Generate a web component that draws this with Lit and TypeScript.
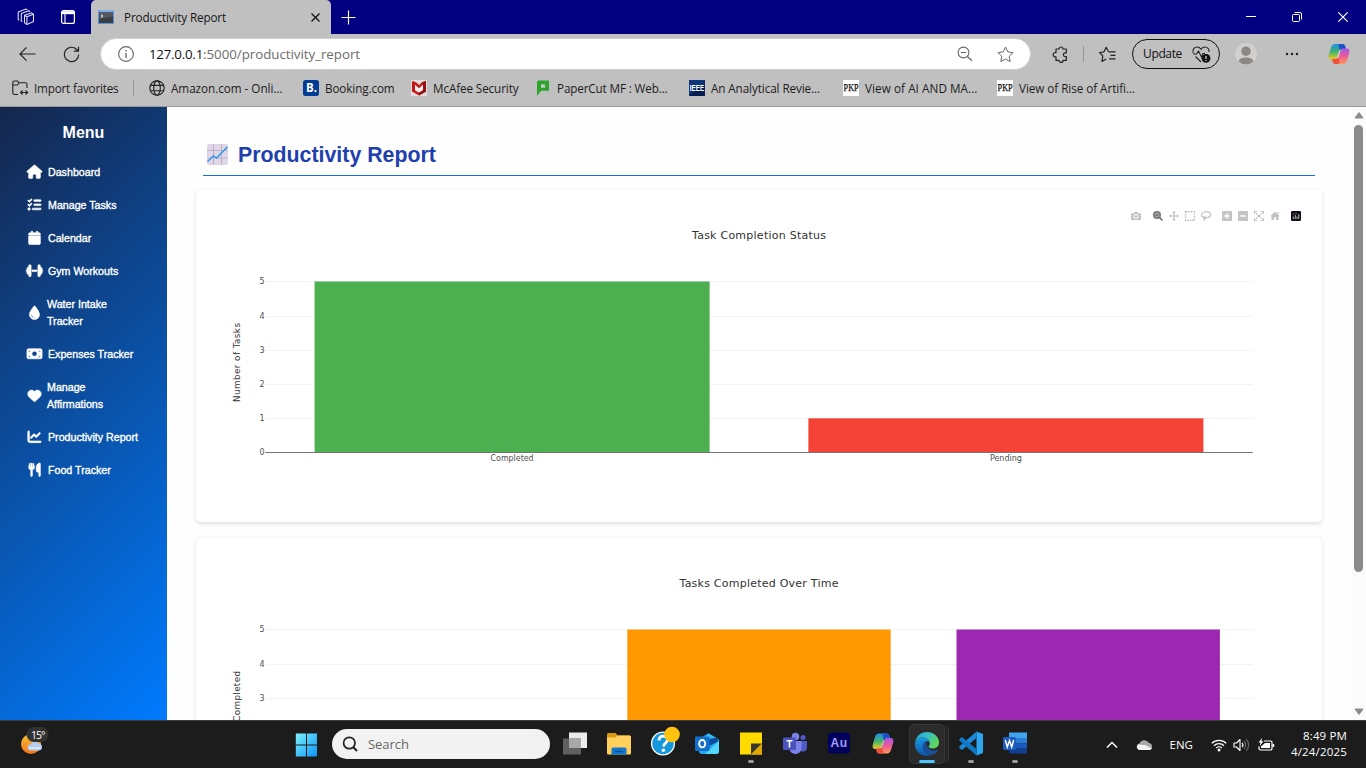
import { LitElement, html, svg, css } from "lit";
import { customElement } from "lit/decorators.js";
import { styleMap } from "lit/directives/style-map.js";

const UI_FONT = '"Open Sans", "Noto Sans", sans-serif';
const ctx = document.createElement("canvas").getContext("2d")!;

/** Text tracked so that it takes up the given advance width. */
function fit(text: string, width: number, size = 11.7, cls = "") {
  ctx.font = `${size}px ${UI_FONT}`;
  const track = (width - ctx.measureText(text).width) / text.length;
  return html`<span class="fit ${cls}" style=${styleMap({ fontSize: `${size}px`, letterSpacing: `${track.toFixed(3)}px` })}>${text}</span>`;
}

const icon = (w: number, h: number, body: unknown, vb = `0 0 ${w} ${h}`) =>
  html`<svg width=${w} height=${h} viewBox=${vb} fill="none">${body}</svg>`;

const shared = css`
  :host { display: block; box-sizing: border-box; font-family: "Open Sans", "Noto Sans", sans-serif; }
  * { box-sizing: border-box; }
  svg { display: block; flex: none; overflow: visible; }
  .fit { white-space: pre; line-height: 16px; }
  .c { display: flex; align-items: center; justify-content: center; }
`;

const copilot = (id: string) => svg`
  <defs>
    <linearGradient id="${id}a" x1="0" y1="0" x2="0" y2="1"><stop offset="0" stop-color="#1f8fe8"/><stop offset=".5" stop-color="#3fb56c"/><stop offset="1" stop-color="#f3c91c"/></linearGradient>
    <linearGradient id="${id}b" x1="0" y1="0" x2="0" y2="1"><stop offset="0" stop-color="#a457e8"/><stop offset=".5" stop-color="#ee5a94"/><stop offset="1" stop-color="#fb9a5a"/></linearGradient>
  </defs>
  <path d="M7 1h7.500c1.600 0 2.300 1 2.700 2.300L18 6h-4c-1.500 0-2.200 1-2.700 2.500l-1.600 5.500c-.5 1.700-1.300 2.500-3 2.500H3.500C.8 16.500.2 14.500.8 12L3 4.500C3.700 2.200 4.800 1 7 1Z" fill="url(#${id}a)"/>
  <path d="M12 1h2.500c1.600 0 2.300 1 2.700 2.300L18 6h-4c-1 0-1.700.5-2.100 1.200L10.500 3C10.200 2 11 1 12 1Z" fill="#1c50c8"/>
  <path d="M15 21H7.500c-1.600 0-2.300-1-2.700-2.300L4 16h4c1.500 0 2.200-1 2.700-2.500L12.300 8c.5-1.500 1.300-2.500 3-2.500h3.200c2.700 0 3.300 2 2.700 4.500L19 17.500c-.7 2.300-1.800 3.500-4 3.500Z" fill="url(#${id}b)"/>
  <path d="M11.900 9.500L9.900 15.500H8.800L10.900 9.200c.4-1.100 1-1.800 1.800-2.200Z" fill="#e6dce0"/>
  <path d="M10 21H7.500c-1.600 0-2.300-1-2.700-2.300L4 16h4c1 0 1.700-.5 2.100-1.200l1.400 4.200c.3 1-.5 2-1.500 2Z" fill="#f0503c"/>`;

const BOOKMARKS: [unknown, string, number][] = [
  [icon(16, 16, svg`<path d="M6 14.500H2.500A1.700 1.700 0 0 1 .8 12.800V2.700A1.700 1.700 0 0 1 2.500 1h3L7 2.800h6.300A1.700 1.700 0 0 1 15 4.500V8M.8 5h4.700L7 3M9 12.500h6.500M10.700 10.300l-2.200 2.200 2.200 2.200M13.500 10.300l2.200 2.200-2.200 2.200" stroke="#222" stroke-width="1.100"/>`), "Import favorites", 84.5],
  [icon(16, 16, svg`<g stroke="#222" stroke-width="1.150"><circle cx="8" cy="8" r="7.200"/><ellipse cx="8" cy="8" rx="3.300" ry="7.200"/><path d="M1.500 5.300h13M1.500 10.700h13"/></g>`), "Amazon.com - Onli...", 111.5],
  [icon(16, 16, svg`<rect width="16" height="16" rx="2.500" fill="#003b95"/><text x="3" y="12" font-size="11.500" font-weight="700" fill="#fff" font-family="Open Sans">B.</text>`), "Booking.com", 69.5],
  [icon(16, 16, svg`<rect width="16" height="16" fill="#e4dcdc"/><path d="M1 1l4 1.200L8 5l3-2.800L15 1v10.500L8 15.500l-7-4Z" fill="#c01818"/><path d="M4 4.700l4 3.500 4-3.500v5.500L8 12.700l-4-2.500Z" fill="#f6eeee"/><path d="M11 2.200L15 1v10.500L8 15.500v-2.800l4-2.500V4.700Z" fill="#8f1010"/>`), "McAfee Security", 85.5],
  [icon(16, 16, svg`<path d="M4 .5h10v10.200H6.200L2 15.800V2.500a2 2 0 0 1 2-2Z" fill="#2ba52b"/><path d="M6 4.300h4v3.500H6Z" fill="#c8c8c8"/>`), "PaperCut MF : Web...", 110.5],
  [icon(16, 16, svg`<rect width="16" height="16" fill="#0c3478"/><path d="M0 16L16 3v13Z" fill="#071c50"/><text x=".8" y="11.400" font-size="8.500" font-weight="700" fill="#fff" font-family="Liberation Sans" textLength="14.400" lengthAdjust="spacingAndGlyphs">IEEE</text>`), "An Analytical Revie...", 109],
  [icon(16, 16, svg`<rect width="16" height="16" fill="#fff"/><text x=".6" y="11.200" font-size="9.500" fill="#111" stroke="#111" stroke-width=".25" font-family="Liberation Serif" textLength="15" lengthAdjust="spacingAndGlyphs">PKP</text>`), "View of AI AND MA...", 112.5],
  [icon(16, 16, svg`<rect width="16" height="16" fill="#fff"/><text x=".6" y="11.200" font-size="9.500" fill="#111" stroke="#111" stroke-width=".25" font-family="Liberation Serif" textLength="15" lengthAdjust="spacingAndGlyphs">PKP</text>`), "View of Rise of Artifi...", 116],
];

@customElement("browser-chrome")
class BrowserChrome extends LitElement {
  static styles = [shared, css`
    .titlebar { height: 34px; background: #000080; display: flex; }
    .lead { width: 91px; padding-left: 5px; display: flex; }
    .lead .c { width: 42px; }
    .tab { width: 240px; background: #c0c0c0; border-radius: 5px 5px 0 0; display: flex; align-items: center; padding: 0 10px 0 7px; color: #151515; }
    .tab .fit { margin-left: 10px; flex: 1; margin-top: -1px; }
    .plus { width: 35px; }
    .wins { margin-left: auto; display: flex; }
    .wins .c { width: 46px; }
    .toolbar { height: 40px; background: #c0c0c0; display: grid; grid-template-columns: 6px 43px 44px 7px 931px 7px 44px 1px 48px 1px 88px 4px 44px 2px 44px 3px 44px; }
    .address { height: 32px; margin-top: 4px; border-radius: 16px; background: #fff; border: 1px solid #d0d0d0; display: flex; align-items: center; padding: 0 16px 0 17px; }
    .host { color: #111; margin-left: 15px; }
    .path { color: #6c6c6c; flex: 1; }
    .address svg + svg { margin-left: 24px; }
    .rule { width: 1px; height: 16px; background: #959595; margin: 12px 0 0 1px; }
    .update { height: 30px; margin-top: 5px; border: 1.3px solid #111; border-radius: 15px; display: flex; align-items: center; padding: 0 8px 0 10px; justify-content: space-between; color: #111; }
    .marks { height: 33px; background: #c0c0c0; border-bottom: 1px solid #999; display: grid; grid-template-columns: 137px 154px 108px 124px 154px 154px 154px 180px; padding: 0 0 4px 12px; color: #1c1c1c; }
    .mark { display: flex; align-items: center; gap: 6px; }
    .mark .fit { margin-top: -1px; }
    .sep { width: 1px; height: 16px; background: #999; margin-left: 8px; }
  `];
  render() {
    return html`
      <div class="titlebar">
        <div class="lead">
          <div class="c">${icon(18, 18, svg`<g stroke="#dcdcf4" stroke-width="1.100" stroke-linejoin="round"><path d="M7.500 7.300l6.800-2.400 2.200 1.400v7.200l-6.600 2.900-2.400-1.500Z"/><path d="M7.500 7.300l2.400 1.500 6.600-2.500M9.900 8.800v7.600"/><path d="M5.300 13.700l-1-.6V5.600l7.500-2.800 1.400.9"/><path d="M2.200 12.200l-1-.7V3.900L9 1.100l1.400.8"/></g>`)}</div>
          <div class="c">${icon(16, 16, svg`<rect x="1.600" y="1.600" width="12.800" height="12.800" rx="2" stroke="#fff" stroke-width="1.200"/><path d="M2 2.200h12v3H2Z" fill="#fff"/><path d="M5 5v9" stroke="#fff" stroke-width="1.100"/>`)}</div>
        </div>
        <div class="tab">
          ${icon(16, 14, svg`<rect width="16" height="14" fill="#5b8fd8"/><path d="M.5 1h15" stroke="#aac8f0"/><rect x="1" y="2.500" width="14" height="10.500" fill="#3a3d42"/><path d="M1 2.500h14v4L1 9Z" fill="#54585e"/><path d="M3 4.500l2 1.500-2 1.500" stroke="#fff"/>`)}
          ${fit("Productivity Report", 102)}
          ${icon(11, 11, svg`<path d="M1.500 1.500l8 8M9.500 1.500l-8 8" stroke="#111" stroke-width="1.300"/>`)}
        </div>
        <div class="c plus">${icon(15, 15, svg`<path d="M7.500 .5v14M.5 7.500h14" stroke="#fff" stroke-width="1.200"/>`)}</div>
        <div class="wins">
          <div class="c">${icon(10, 10, svg`<path d="M0 4.500h10" stroke="#fff"/>`)}</div>
          <div class="c">${icon(10, 10, svg`<rect x=".5" y="2.500" width="7" height="7" rx="1" stroke="#fff"/><path d="M2.500 .5h5.500a1.500 1.500 0 0 1 1.500 1.500v5.500" stroke="#fff"/>`)}</div>
          <div class="c">${icon(10, 10, svg`<path d="M.3 .3l9.400 9.400M9.700 .3L.3 9.700" stroke="#fff" stroke-width="1.200"/>`)}</div>
        </div>
      </div>
      <div class="toolbar">
        <i></i>
        <div class="c">${icon(17, 15, svg`<path d="M16.500 7H1M7.500 .3L1 7l6.500 6.700" stroke="#222" stroke-width="1.200"/>`)}</div>
        <div class="c">${icon(17, 17, svg`<path d="M15.700 8.500a7.200 7.200 0 1 1-2.300-5.300l1.800 1.800M15.500 .8v4.400h-4.600" stroke="#222" stroke-width="1.200"/>`)}</div>
        <i></i>
        <div class="address">
          ${icon(16, 16, svg`<circle cx="8" cy="8" r="7.400" stroke="#666" stroke-width="1.100"/><path d="M8 7v5M8 4v1.400" stroke="#666" stroke-width="1.300"/>`)}
          ${fit("127.0.0.1", 54, 13.3, "host")}${fit(":5000/productivity_report", 157, 13.3, "path")}
          ${icon(16, 16, svg`<circle cx="6.500" cy="6.500" r="5.400" stroke="#666" stroke-width="1.100"/><path d="M3.800 6.500h5.400M10.500 10.500l4.500 4.200" stroke="#666" stroke-width="1.200"/>`)}
          ${icon(17, 17, svg`<path d="M8.500 1l2.300 4.900 5.300.7-3.900 3.700 1 5.300-4.700-2.600-4.700 2.600 1-5.300L.9 6.600l5.300-.7Z" stroke="#6a6a6a" stroke-linejoin="round"/>`)}
        </div>
        <i></i>
        <div class="c">${icon(17, 17, svg`<path d="M4 3h3a2 2 0 1 1 4 0h3.300v3.800h-1a1.900 1.900 0 0 0 0 3.800h1v3.800H11a2 2 0 0 1-4 0H4v-3.600a2.200 2.200 0 1 1 0-4.200Z" stroke="#222" stroke-width="1.200" stroke-linejoin="round"/>`)}</div>
        <div class="rule"></div>
        <div class="c">${icon(17, 17, svg`<path d="M9.800 5.800H16.500M11.500 9.300h5M10 12.800h6.500M9.500 5.800L7.200 1.300 5 5.800l-4.500.7 3.300 3.300L3 15.500l4.200-2.400" stroke="#222" stroke-width="1.200" stroke-linejoin="round"/>`)}</div>
        <i></i>
        <div class="update">${fit("Update", 39, 12)}
          ${icon(19, 17, svg`<path d="M1 7C.2 3.500 2.500 1 5 1c1.700 0 3 .8 4 2.200C10 1.800 11.300 1 13 1c2.500 0 4.500 2.300 4 5M3.500 10.500L9 16M1 8h3.500L6.500 5l3 6L11 7.500h2" stroke="#222" stroke-width="1.100"/><circle cx="14" cy="12.300" r="4.400" fill="#111"/><path d="M14 10v3M14 14v1" stroke="#ddd" stroke-width="1.200"/>`)}
        </div>
        <i></i>
        <div class="c">${icon(22, 22, svg`<circle cx="11" cy="11" r="11" fill="#d2d0ce"/><circle cx="11" cy="8.200" r="4.800" fill="#8c8884"/><path d="M3.500 18.500c1-3 3-4 7.500-4s6.500 1 7.500 4a11 11 0 0 1-15 0Z" fill="#8c8884"/>`)}</div>
        <i></i>
        <div class="c">${icon(14, 4, svg`<g fill="#222"><circle cx="2" cy="2" r="1.250"/><circle cx="7" cy="2" r="1.250"/><circle cx="12" cy="2" r="1.250"/></g>`)}</div>
        <i></i>
        <div class="c">${icon(22, 22, copilot("t"))}</div>
      </div>
      <div class="marks">
        ${BOOKMARKS.map(([ic, name, w], i) => html`<div class="mark">${ic}${fit(name, w)}${i === 0 ? html`<span class="sep"></span>` : ""}</div>`)}
      </div>`;
  }
}

const MENU: [string[], string, string][] = [
  [["Dashboard"], "0 0 576 512", "M575.8 255.5c0 18-15 32.1-32 32.1h-32l.7 160.2c0 2.7-.2 5.4-.5 8.1V472c0 22.1-17.900 40-40 40H456c-1.100 0-2.200 0-3.300-.1c-1.400 .1-2.800 .1-4.200 .1H416 392c-22.100 0-40-17.900-40-40V448 384c0-17.700-14.300-32-32-32H256c-17.700 0-32 14.300-32 32v64 24c0 22.100-17.900 40-40 40H160 128.100c-1.500 0-3-.1-4.500-.2c-1.200 .1-2.400 .2-3.600 .2H104c-22.100 0-40-17.900-40-40V360c0-.9 0-1.900 .1-2.800V287.600H32c-18 0-32-14-32-32.100c0-9 3-17 10-24L266.400 8c7-7 15-8 22-8s15 2 21 7L564.800 231.500c8 7 12 15 11 24z"],
  [["Manage Tasks"], "0 0 512 512", "M152.1 38.2c9.900 8.900 10.700 24 1.800 33.900l-72 80c-4.400 4.900-10.600 7.800-17.200 7.900s-12.900-2.400-17.600-7L7 113C-2.300 103.600-2.300 88.400 7 79s24.600-9.400 33.900 0l22.100 22.100 55.100-61.200c8.900-9.900 24-10.700 33.900-1.800zm0 160c9.900 8.900 10.700 24 1.800 33.900l-72 80c-4.400 4.900-10.600 7.800-17.200 7.900s-12.900-2.400-17.600-7L7 273c-9.400-9.400-9.400-24.600 0-33.900s24.600-9.400 33.900 0l22.100 22.100 55.100-61.200c8.900-9.900 24-10.700 33.900-1.800zM224 96c0-17.700 14.300-32 32-32H480c17.700 0 32 14.300 32 32s-14.300 32-32 32H256c-17.700 0-32-14.300-32-32zm0 160c0-17.700 14.300-32 32-32H480c17.700 0 32 14.300 32 32s-14.300 32-32 32H256c-17.700 0-32-14.300-32-32zM160 416c0-17.700 14.300-32 32-32H480c17.700 0 32 14.300 32 32s-14.300 32-32 32H192c-17.700 0-32-14.300-32-32zM48 368a48 48 0 1 1 0 96 48 48 0 1 1 0-96z"],
  [["Calendar"], "0 0 448 512", "M96 32V64H48C21.500 64 0 85.500 0 112v48H448V112c0-26.500-21.500-48-48-48H352V32c0-17.700-14.300-32-32-32s-32 14.300-32 32V64H160V32c0-17.700-14.300-32-32-32S96 14.300 96 32zM448 192H0V464c0 26.500 21.500 48 48 48H400c26.500 0 48-21.500 48-48V192z"],
  [["Gym Workouts"], "0 0 640 512", "M96 64c0-17.700 14.300-32 32-32h32c17.700 0 32 14.300 32 32V224v64V448c0 17.700-14.300 32-32 32H128c-17.700 0-32-14.300-32-32V384H64c-17.700 0-32-14.300-32-32V288c-17.700 0-32-14.300-32-32s14.300-32 32-32V160c0-17.700 14.300-32 32-32H96V64zm448 0v64h32c17.700 0 32 14.300 32 32v64c17.700 0 32 14.300 32 32s-14.300 32-32 32v64c0 17.700-14.300 32-32 32H544v64c0 17.700-14.300 32-32 32H480c-17.700 0-32-14.300-32-32V288 224 64c0-17.700 14.300-32 32-32h32c17.700 0 32 14.300 32 32zM416 224v64H224V224H416z"],
  [["Water Intake", "Tracker"], "0 0 384 512", "M192 512C86 512 0 426 0 320C0 228.800 130.200 57.700 166.600 11.700C172.600 4.200 181.500 0 191.100 0h1.800c9.600 0 18.500 4.200 24.500 11.700C253.800 57.700 384 228.800 384 320c0 106-86 192-192 192zM96 336c0-8.800-7.200-16-16-16s-16 7.200-16 16c0 61.900 50.100 112 112 112c8.800 0 16-7.200 16-16s-7.200-16-16-16c-44.200 0-80-35.800-80-80z"],
  [["Expenses Tracker"], "0 0 576 512", "M64 64C28.700 64 0 92.700 0 128V384c0 35.300 28.700 64 64 64H512c35.300 0 64-28.700 64-64V128c0-35.300-28.700-64-64-64H64zm64 320H64V320c35.300 0 64 28.700 64 64zM64 192V128h64c0 35.300-28.700 64-64 64zM448 384c0-35.300 28.700-64 64-64v64H448zm64-192c-35.300 0-64-28.700-64-64h64v64zM288 160a96 96 0 1 1 0 192 96 96 0 1 1 0-192z"],
  [["Manage", "Affirmations"], "0 0 512 512", "M47.600 300.400L228.300 469.100c7.500 7 17.400 10.900 27.700 10.900s20.200-3.900 27.700-10.900L464.400 300.400c30.400-28.300 47.600-68 47.600-109.500v-5.800c0-69.900-50.500-129.500-119.400-141C347 36.500 300.600 51.400 268 84L256 96 244 84c-32.600-32.600-79-47.500-124.600-39.900C50.500 55.600 0 115.200 0 185.100v5.800c0 41.500 17.200 81.200 47.600 109.500z"],
  [["Productivity Report"], "0 0 512 512", "M64 64c0-17.700-14.300-32-32-32S0 46.300 0 64V400c0 44.200 35.800 80 80 80H480c17.700 0 32-14.300 32-32s-14.300-32-32-32H80c-8.800 0-16-7.200-16-16V64zm406.600 86.600c12.500-12.500 12.500-32.800 0-45.300s-32.800-12.500-45.300 0L320 210.700l-57.400-57.400c-12.500-12.500-32.800-12.500-45.300 0l-112 112c-12.500 12.500-12.500 32.800 0 45.300s32.800 12.500 45.300 0L240 221.300l57.400 57.400c12.500 12.500 32.800 12.500 45.300 0l128-128z"],
  [["Food Tracker"], "0 0 448 512", "M416 0C400 0 288 32 288 176V288c0 35.300 28.700 64 64 64h32V480c0 17.700 14.300 32 32 32s32-14.300 32-32V352 240 32c0-17.700-14.300-32-32-32zM64 16C64 7.800 57.900 1 49.700 .1S34.200 4.600 32.400 12.500L2.100 148.800C.7 155.100 0 161.500 0 167.900c0 45.900 35.100 83.600 80 87.700V480c0 17.700 14.300 32 32 32s32-14.300 32-32V255.600c44.900-4.100 80-41.800 80-87.700c0-6.400-.7-12.800-2.100-19.100L191.600 12.500c-1.800-8-9.300-13.300-17.400-12.400S160 7.800 160 16V150.200c0 5.400-4.400 9.800-9.800 9.800c-5.100 0-9.300-3.900-9.800-9L127.900 14.600C127.200 6.300 120.300 0 112 0s-15.200 6.300-15.900 14.600L83.700 151c-.5 5.100-4.700 9-9.800 9c-5.400 0-9.800-4.400-9.800-9.800V16z"],
];

@customElement("side-menu")
class SideMenu extends LitElement {
  static styles = [shared, css`
    :host { width: 167px; flex: none; background: linear-gradient(135deg, #15264c, #007bff); color: #fff; font-family: "Liberation Sans", Arial, sans-serif; }
    .title { font-size: 16px; font-weight: 700; line-height: 18px; text-align: center; padding-top: 17px; margin-bottom: 22px; }
    .item { display: flex; align-items: center; margin-bottom: 16px; padding-left: 26px; font-size: 10.67px; line-height: 17px; -webkit-text-stroke: 0.35px #fff; }
    .item svg { width: 17px; height: 13.5px; margin: -1px 5px 0 0; }
    .item path { fill: #fff; stroke: #fff; stroke-width: 22px; }
    .two .line { margin-left: -1px; }
    .line { display: block; white-space: nowrap; }
  `];
  render() {
    return html`<div class="title">Menu</div>
      ${MENU.map(([lines, vb, d]) => html`<div class="item ${lines.length > 1 ? "two" : ""}">
        <svg viewBox=${vb}><path d=${d} /></svg>
        <span>${lines.map((l) => html`<span class="line">${l}</span>`)}</span>
      </div>`)}`;
  }
}

interface Chart { title: string; titleW: number; yTitle: string; ySpan: number; slots: { v: number; fill: string; label: string; w: number }[] }
const CHARTS: Chart[] = [
  { title: "Task Completion Status", titleW: 134, yTitle: "Number of Tasks", ySpan: 79, slots: [
    { v: 5, fill: "#4caf50", label: "Completed", w: 43 }, { v: 1, fill: "#f44336", label: "Pending", w: 32 }] },
  { title: "Tasks Completed Over Time", titleW: 159, yTitle: "Tasks Completed", ySpan: 79, slots: [
    { v: 0, fill: "#2196f3", label: "", w: 0 }, { v: 5, fill: "#ff9800", label: "", w: 0 }, { v: 5, fill: "#9c27b0", label: "", w: 0 }] },
];
const X0 = 265.2, X1 = 1252.8, Y0 = 452.5, STEP = 34.2;

@customElement("report-chart")
class ReportChart extends LitElement {
  static properties = { chart: { attribute: false } };
  declare chart: Chart;
  static styles = [shared, css`
    :host { height: 332px; flex: none; background: #fff; border-radius: 5px; box-shadow: 0 1.5px 4px rgba(0, 0, 0, 0.12); }
    text { font-family: "DejaVu Sans", Verdana, sans-serif; fill: #505050; }
    .title { font-size: 11px; fill: #333; }
    .tick { font-size: 8px; }
    .ytitle { font-size: 8.8px; fill: #333; }
  `];
  render() {
    const c = this.chart;
    const slot = (X1 - X0) / c.slots.length;
    return html`<svg width="1126" height="332" viewBox="196 190 1126 332">
      <text class="title" x=${759 - c.titleW / 2} y="239" textLength=${c.titleW}>${c.title}</text>
      ${[1, 2, 3, 4, 5].map((n) => { const y = Math.round(Y0 - n * STEP - 0.1) + 0.5 - (n === 5 || n === 0 ? 0 : 0); return svg`<line x1=${X0} x2=${X1} y1=${y} y2=${y} stroke="#f2f4f4"/>`; })}
      ${[0, 1, 2, 3, 4, 5].map((n) => svg`<text class="tick" x="264.700" y=${Y0 - n * STEP + 2.8} text-anchor="end">${n}</text>`)}
      ${c.slots.map((s, i) => s.v ? svg`<rect x=${X0 + slot * (i + 0.1)} y=${Y0 - s.v * STEP} width=${slot * 0.8} height=${s.v * STEP} fill=${s.fill}/>` : "")}
      <line x1=${X0} x2=${X1} y1=${Y0} y2=${Y0} stroke="#757575" />
      ${c.slots.map((s, i) => s.label ? svg`<text class="tick" x=${X0 + slot * (i + 0.5) - s.w / 2} y="461" textLength=${s.w} lengthAdjust="spacingAndGlyphs">${s.label}</text>` : "")}
      <text class="ytitle" transform="translate(239.700 ${362.5 + c.ySpan / 2}) rotate(-90)" textLength=${c.ySpan}>${c.yTitle}</text>
    </svg>`;
  }
}

const BAR_TOOLS: [number, unknown][] = [
  [0, svg`<path d="M0 2.200h2.500L3.500 1h3l1 1.200H10V9H0Z" fill="#c4c4c4"/><circle cx="5" cy="5.500" r="2.100" stroke="#fff" stroke-width="1"/>`],
  [12, svg`<circle cx="4" cy="4" r="3.200" stroke="#7a7a7a" stroke-width="1.700" fill="#aaa"/><path d="M2.500 4h3M6.500 6.500L9.500 9.500" stroke="#707070" stroke-width="1.700"/>`],
  [6, svg`<path d="M5 1v8M1 5h8" stroke="#bbb" stroke-width="1.100"/><path d="M5 0l1.800 2H3.200ZM5 10L3.200 8h3.600ZM0 5l2-1.800v3.600ZM10 5L8 6.800V3.200Z" fill="#bbb"/>`],
  [6, svg`<rect x=".6" y=".6" width="8.800" height="8.800" stroke="#b4b4b4" stroke-width="1.100" stroke-dasharray="1.600 1"/>`],
  [6, svg`<path d="M3 6.200C1.500 6 .6 5 .6 3.800.6 2 2.600.8 5.200.8s4.300 1.200 4.300 2.900-1.800 3-4.500 3M3.800 5.800c1.200.6.8 1.700-.3 1.700S2 6.500 3.800 5.800ZM3.500 7.300c.5.700.2 1.700-.6 2.400" stroke="#b8b8b8" stroke-width="1.100"/>`],
  [11, svg`<rect width="10" height="10" rx=".6" fill="#c4c4c4"/><path d="M5 2.200v5.600M2.200 5h5.600" stroke="#fff" stroke-width="1.400"/>`],
  [6, svg`<rect width="10" height="10" rx=".6" fill="#c4c4c4"/><path d="M2.200 5h5.600" stroke="#fff" stroke-width="1.400"/>`],
  [6, svg`<path d="M.5 3V.5H3M7 .5h2.500V3M9.500 7v2.500H7M3 9.500H.5V7M2 2l6 6M8 2L2 8" stroke="#b8b8b8"/>`],
  [6, svg`<path d="M5 .8l4.800 4.400H8.500V9H6V6.300H4V9H1.500V5.200H.2ZM7.300 1h1.400v2.500L7.300 2.200Z" fill="#c0c0c0"/>`],
  [11, svg`<rect width="10" height="10" rx="1.200" fill="#0c0c14"/><path d="M2.300 8V5.500M4.300 8V4M6 8V5.500M7.800 8V3" stroke="#ccc" stroke-width=".9"/><circle cx="2.300" cy="3" r=".7" fill="#e0407a"/><circle cx="5" cy="2.300" r=".6" fill="#bbb"/>`],
];

@customElement("report-page")
class ReportPage extends LitElement {
  static styles = [shared, css`
    :host { height: 613px; flex: none; display: flex; overflow: hidden; background: #fefefe; }
    .body { flex: 1; min-width: 0; padding: 31px 29px 0; display: flex; flex-direction: column; height: 613px; overflow: hidden; }
    .head { margin: 0 7px 14px; height: 38px; border-bottom: 1px solid #0f74d8; padding: 0 0 3px 4px; display: flex; align-items: center; gap: 10px; font: 700 21.33px/34px "Liberation Sans", Arial, sans-serif; color: #1e40af; }
    .head svg { margin-top: -2px; }
    .cards { display: flex; flex-direction: column; gap: 16px; position: relative; }
    .tools { position: absolute; top: 21px; right: 21px; display: flex; }
    .scroll { width: 15px; background: #fbfbfb; display: flex; flex-direction: column; align-items: center; padding: 4px 0 4px 0; }
    .thumb { width: 9px; height: 447px; margin: 6px 0 auto 0; background: #8b8b8b; border-radius: 4.5px; }
  `];
  render() {
    return html`<side-menu></side-menu>
      <main class="body">
        <div class="head">
          ${icon(21, 21, svg`<rect width="21" height="21" rx="2.500" fill="#dfd6e8"/><path d="M6.500 0v21M14.500 0v21M0 6.500h21M0 14h21" stroke="#b9afc4" stroke-width=".9"/><path d="M.5 17.500l6-5.500 3 2L20.500 2.800" stroke="#3298e8" stroke-width="1.500"/>`)}
          <span>Productivity Report</span>
        </div>
        <div class="cards">
          ${CHARTS.map((c) => html`<report-chart .chart=${c}></report-chart>`)}
          <div class="tools">${BAR_TOOLS.map(([gap, g]) => html`<svg style=${styleMap({ marginLeft: `${gap}px` })} width="10" height="10" viewBox="0 0 10 10" fill="none">${g}</svg>`)}</div>
        </div>
      </main>
      <div class="scroll">
        ${icon(10, 8, svg`<path d="M5 1.500L9 7H1Z" fill="#8b8b8b" stroke="#8b8b8b" stroke-linejoin="round"/>`)}
        <div class="thumb"></div>
        ${icon(10, 8, svg`<path d="M5 6.500L9 1H1Z" fill="#8b8b8b" stroke="#8b8b8b" stroke-linejoin="round"/>`)}
      </div>`;
  }
}

const APPS: [string, unknown][] = [
  ["", svg`<rect x="6" y="1.500" width="18" height="15.500" fill="#ececec"/><rect x="0" y="7.500" width="18" height="16" fill="#606060"/><rect x="6" y="7.500" width="12" height="9.500" fill="#a8a8a8"/>`],
  ["", svg`<path d="M0 3.500A1.500 1.500 0 0 1 1.500 2h7L11 4.500h11.500A1.500 1.500 0 0 1 24 6v6H0Z" fill="#d99a10"/><path d="M0 6.500h8l3-2h11.500A1.500 1.500 0 0 1 24 6v16a1.500 1.500 0 0 1-1.500 1.500h-21A1.500 1.500 0 0 1 0 22Z" fill="#ffd05c"/><path d="M4.500 23.500V18A1.500 1.500 0 0 1 6 16.500h12a1.500 1.500 0 0 1 1.500 1.500v5.500Z" fill="#1278cc"/><path d="M8 20.500h8" stroke="#0a4f94" stroke-width="1.400"/>`],
  ["", svg`<circle cx="12" cy="12.500" r="11.400" fill="#1597dc" stroke="#fff" stroke-width="1.300"/><path d="M8 9.500c0-2.800 1.800-4.300 4.200-4.300s4.200 1.500 4.200 3.800c0 3.200-3.900 3.400-3.900 6.500" stroke="#fff" stroke-width="2.800"/><circle cx="12.400" cy="19.200" r="1.800" fill="#fff"/><circle cx="21" cy="3.500" r="7.800" fill="#ffc20e"/>`],
  ["", svg`<path d="M4 8l9-6 10 6v6H4Z" fill="#1066b8"/><path d="M8 6l6-3.500 8 5-9 6Z" fill="#38b8f0"/><path d="M4 14l9 0 11-6v12a3 3 0 0 1-3 3H7a3 3 0 0 1-3-3Z" fill="#28a8ea"/><path d="M24 10v10a3 3 0 0 1-3 3H10Z" fill="#50d9ff"/><path d="M14 8l9-1.500v4L14 15Z" fill="#0a4d9c"/><rect x="0" y="5.500" width="14.500" height="14.500" rx="1.200" fill="#1170cc"/><ellipse cx="7.200" cy="12.700" rx="3" ry="3.700" stroke="#fff" stroke-width="1.900"/>`],
  ["dot", svg`<rect x="1" y="1.500" width="22" height="22" fill="#ffd900"/><path d="M12 12.500h11L12 23.500Z" fill="#3a3630"/><path d="M12 23.500l11-11v11Z" fill="#e0a800"/>`],
  ["", svg`<circle cx="12.500" cy="5.500" r="3.800" fill="#7b83eb"/><circle cx="20" cy="6.500" r="2.500" fill="#5059c9"/><path d="M16 10h8v6.500a4 4 0 0 1-6 3.500Z" fill="#5059c9"/><path d="M7 10h11.500v7a6.200 6.200 0 0 1-11.500 3Z" fill="#7b83eb"/><rect x="0" y="6.500" width="13" height="12.500" rx="1.200" fill="#4b53bc"/><path d="M3.500 9.800h6M6.500 9.800v6.700" stroke="#fff" stroke-width="1.600"/>`],
  ["", svg`<rect x="1" y="1.500" width="22" height="21" rx="3.500" fill="#00005b"/><text x="3.500" y="16.200" font-size="12" font-weight="700" fill="#a59cff" font-family="Liberation Sans" textLength="16.500">Au</text>`],
  ["", svg`<g transform="translate(1 1.500)">${copilot("b")}</g>`],
  ["edge", svg`<defs><linearGradient id="eg" x1="0" y1="0" x2="1" y2=".5"><stop offset="0" stop-color="#22a4dc"/><stop offset=".5" stop-color="#35c0c4"/><stop offset="1" stop-color="#5ed85a"/></linearGradient><linearGradient id="eb" x1="0" y1="0" x2="0" y2="1"><stop offset="0" stop-color="#1a9ae0"/><stop offset="1" stop-color="#0e55a8"/></linearGradient></defs><path d="M.3 11C1 5 6 1 12 1c7.500 0 12 5.500 12 10.500 0 3.800-2.800 6-6.200 6-2.800 0-4.200-1-4.200-1.900 0-.7 1.200-1.300 1.200-3.200C14.800 9 11.500 6.500 8 6.500 4 6.500 1.300 8.500.3 11Z" fill="url(#eg)"/><path d="M.3 11C1.300 8.500 4 6.500 8 6.500c3 0 5.500 1.500 6.500 4-3-1.300-6.700 1-6.700 5 0 4.500 3.700 8.500 8 8.500-1.200.6-2.500.9-3.800.9C5 25 0 19.500 0 13.500 0 12.500.1 11.800.3 11Z" fill="url(#eb)"/><path d="M7.800 15.500c0-2.800 1.700-4.800 3.800-5.200-1.500 3.700 1.900 9.200 6.900 9.200 2 0 3.200-.8 3.900-.8.6 0 .8.600.4 1.100-1.500 2.200-3.800 4.200-7 4.200-4.300 0-8-4-8-8.500Z" fill="#174f98"/>`],
  ["dot", svg`<path d="M17.500 .5L24 3v19l-6.500 2.500Z" fill="#2ba6f0"/><path d="M17.500 .5V7L3 19 .3 17V15.500Z" fill="#1a8ad8"/><path d="M17.500 24.500V18L3 6 .3 8v1.500Z" fill="#0f78c4"/>`],
  ["dot", svg`<rect x="6" y="1.500" width="18" height="6" fill="#41a5ee"/><rect x="6" y="7" width="18" height="5.500" fill="#2b7cd3"/><rect x="6" y="12.500" width="18" height="5" fill="#185abd"/><rect x="6" y="17.500" width="18" height="5" fill="#103f91"/><rect x="0" y="6" width="13" height="13" rx="1.200" fill="#1a5cc0"/><path d="M2.300 9l2 7L6.500 9.500l2.200 6.500 2-7" stroke="#fff" stroke-width="1.500"/>`],
];

@customElement("task-bar")
class TaskBar extends LitElement {
  static styles = [shared, css`
    :host { height: 48px; flex: none; background: #1c1c1c; border-top: 1px solid #3c3f3c; display: flex; color: #fff; }
    .weather { width: 284px; padding: 5px 0 0 21px; }
    .start { width: 44px; }
    .search { width: 218px; height: 30px; margin: 8px 3px 0 4px; border-radius: 15px; background: #f2f2f2; display: flex; align-items: center; gap: 10px; padding-left: 10px; color: #666; }
    .app { width: 44px; height: 47px; display: flex; flex-direction: column; align-items: center; padding-top: 10px; }
    .dot::after { content: ""; width: 6px; height: 3px; border-radius: 2px; background: #9a9a9a; margin-top: 3px; flex: none; }
    .edge { background: #2b2b2b; border: 1px solid #363636; border-radius: 5px; height: 40px; width: 36px; margin: 3px 4px 0 4px; padding-top: 6px; box-shadow: 4px 0 0 -1px #252525, 5px 0 0 -1px #353535; }
    .edge::after { content: ""; width: 16px; height: 3px; border-radius: 2px; background: #4cc2ff; margin-top: 3px; flex: none; }
    .tray { margin-left: auto; display: flex; align-items: center; padding-right: 19px; }
    .tray > * { flex: none; }
    .clock { width: 58px; margin: -1px 0 0 14px; display: flex; flex-direction: column; align-items: flex-end; }
    .up { margin-right: 18px; }
    .cloud { margin-right: 17px; }
    .wifi { margin: 0 6px 0 18px; }
    .vol { margin-right: 8px; }
  `];
  render() {
    return html`
      <div class="weather">${icon(30, 32, svg`
        <defs><linearGradient id="mo" x1="0" y1="0" x2="0" y2="1"><stop offset="0" stop-color="#f8c234"/><stop offset="1" stop-color="#f0741c"/></linearGradient></defs>
        <circle cx="10" cy="18" r="10" fill="url(#mo)"/>
        <path d="M9.500 24.500a3 3 0 0 1 0-6 4.500 4.500 0 0 1 8-1 3.500 3.500 0 0 1 0 7Z" fill="#b4cdf4"/><path d="M8 22h11.500" stroke="#e4eefc" stroke-width="1.500"/>
        <rect x="5.500" y="1" width="22" height="15" rx="7.500" fill="#323232"/><text x="10" y="12.500" font-size="10.500" fill="#fff" textLength="14.500" font-family="Open Sans">15°</text>`)}</div>
      <div class="c start">${icon(23, 24, svg`<defs><linearGradient id="ws" x1="0" y1="0" x2="1" y2="1"><stop offset="0" stop-color="#7df3fc"/><stop offset="1" stop-color="#0c92f8"/></linearGradient></defs><path d="M.8 .5h10.200v11H.8ZM12 .5h10v11H12ZM.8 12.500h10.200v11H.8ZM12 12.500h10v11H12Z" fill="url(#ws)"/>`)}</div>
      <div class="search">${icon(16, 16, svg`<circle cx="7.300" cy="7" r="5.700" stroke="#222" stroke-width="1.700"/><path d="M11 11l4 4" stroke="#222" stroke-width="2"/>`)}${fit("Search", 41, 13)}</div>
      ${APPS.map(([cls, g]) => html`<div class="app ${cls}">${icon(24, 26, g)}</div>`)}
      <div class="tray">
        <div class="up">${icon(12, 8, svg`<path d="M1 6.500l5-5 5 5" stroke="#fff" stroke-width="1.500"/>`)}</div>
        <div class="cloud">${icon(17, 12, svg`<path d="M3.500 11a3.300 3.300 0 0 1 0-6.500A5.300 5.300 0 0 1 13 4a3.600 3.600 0 0 1 .5 7Z" fill="#a8a8a8"/><path d="M3.500 11A3.300 3.300 0 0 1 2 5.500l7 .5L16 9.500A3.400 3.400 0 0 1 13.500 11Z" fill="#f4f4f4"/>`)}</div>
        ${fit("ENG", 23.5, 11.5)}
        <div class="wifi">${icon(16, 14, svg`<g stroke="#fff" stroke-width="1.300"><path d="M.8 5.300a10.200 10.200 0 0 1 14.400 0M3 7.700a7 7 0 0 1 10 0M5.200 10a4 4 0 0 1 5.600 0"/></g><circle cx="8" cy="12" r="1.500" fill="#fff"/>`)}</div>
        <div class="vol">${icon(17, 14, svg`<path d="M1 5h2.500L7 1.500v11L3.500 9H1Z" stroke="#fff" stroke-width="1.100" stroke-linejoin="round"/><path d="M9 4.800a3.200 3.200 0 0 1 0 4.400" stroke="#fff" stroke-width="1.100"/><path d="M11 3a5.700 5.700 0 0 1 0 8M13.200 1.200a8.300 8.300 0 0 1 0 11.600" stroke="#6c6c6c" stroke-width="1.100"/>`)}</div>
        ${icon(17, 14, svg`<path d="M6 3h6.500A1.500 1.500 0 0 1 14 4.500v6a1.500 1.500 0 0 1-1.500 1.500h-10A1.500 1.500 0 0 1 1 10.500V8.500" stroke="#fff" stroke-width="1.200"/><path d="M7 5h5v5H3V8.500Z" fill="#fff"/><path d="M14.500 6h1.700v3h-1.700ZM4 0L.5 4.500h2L1.800 8 5.500 3.300h-2Z" fill="#fff"/>`)}
        <div class="clock">${fit("8:49 PM", 44, 11.5)}${fit("4/24/2025", 56, 11.5)}</div>
      </div>`;
  }
}

@customElement("app-root")
class AppRoot extends LitElement {
  static styles = css`
    :host { display: flex; flex-direction: column; width: 1366px; height: 768px; overflow: hidden; }
  `;
  render() {
    return html`<browser-chrome></browser-chrome><report-page></report-page><task-bar></task-bar>`;
  }
}
